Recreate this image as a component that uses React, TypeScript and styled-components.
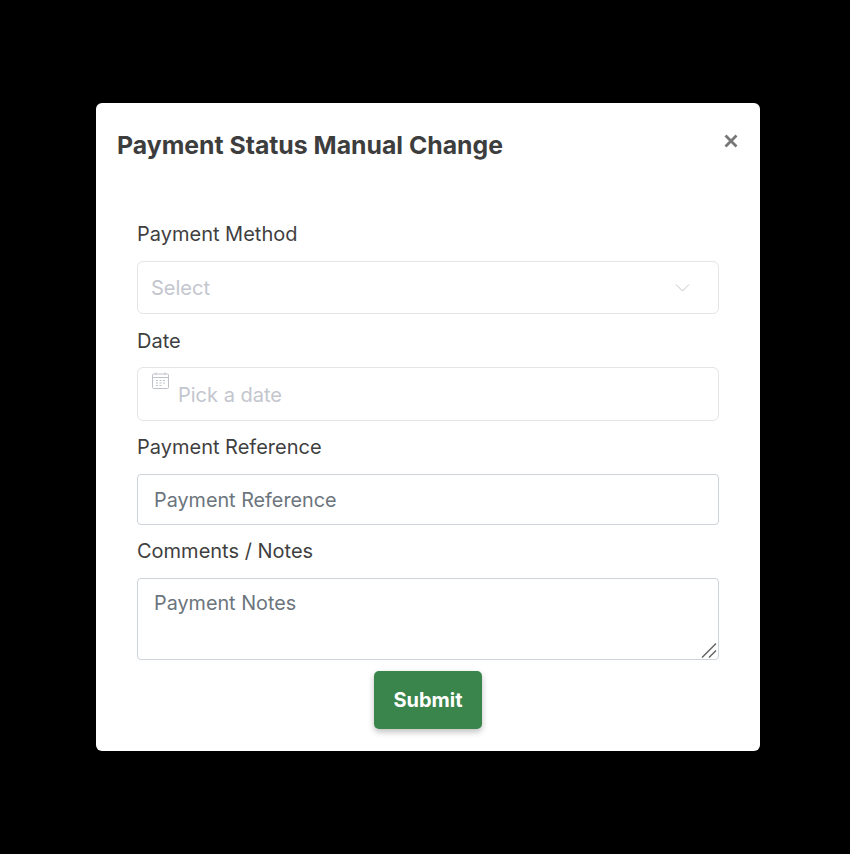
import React from 'react';
import styled, { createGlobalStyle } from 'styled-components';

const GlobalStyle = createGlobalStyle`
  * {
    box-sizing: border-box;
  }
  body {
    margin: 0;
    background: #000;
    font-family: 'Inter', 'Lato', sans-serif;
  }
`;

const App: React.FC = () => {
  return (
    <>
      <GlobalStyle />
      <Overlay>
        <Modal>
          <Header>
            <Title>Payment Status Manual Change</Title>
            <CloseButton aria-label="Close">
              <svg width="14" height="14" viewBox="0 0 14 14">
                <path d="M1.5 1.5 L12.5 12.5 M12.5 1.5 L1.5 12.5" stroke="#777" strokeWidth="2.8" />
              </svg>
            </CloseButton>
          </Header>
          <Form>
            <Label>Payment Method</Label>
            <SelectBox>
              <span>Select</span>
              <svg width="15" height="10" viewBox="0 0 15 10" fill="none">
                <path d="M1 1.5 L7.5 8 L14 1.5" stroke="#c2c5cc" strokeWidth="1" />
              </svg>
            </SelectBox>
            <Label $gap={13}>Date</Label>
            <DateBox>
              <CalendarIcon width="17" height="17" viewBox="0 0 17 17" fill="none">
                <rect x="0.5" y="2" width="16" height="14.5" rx="1" stroke="#bfc2c9" />
                <path d="M0.5 5.5 H16.5 M4 0.5 V3 M13 0.5 V3" stroke="#bfc2c9" />
                <path
                  d="M4 8.5 H6 M7.5 8.5 H9.5 M11 8.5 H13 M4 11 H6 M7.5 11 H9.5 M11 11 H13 M4 13.5 H6 M7.5 13.5 H9.5"
                  stroke="#bfc2c9"
                />
              </CalendarIcon>
              <DateInput placeholder="Pick a date" />
            </DateBox>
            <Label>Payment Reference</Label>
            <TextInput placeholder="Payment Reference" />
            <Label>Comments / Notes</Label>
            <NotesWrap>
              <NotesArea placeholder="Payment Notes" />
              <Grip width="16" height="16" viewBox="0 0 16 16" fill="none">
                <path d="M1 15.5 L15 1.5 M8 15.5 L15 8.5" stroke="#666" strokeWidth="1.5" />
              </Grip>
            </NotesWrap>
            <SubmitButton type="button">Submit</SubmitButton>
          </Form>
        </Modal>
      </Overlay>
    </>
  );
};

const Overlay = styled.div`
  min-height: 100vh;
  display: flex;
  justify-content: center;
  align-items: center;
  padding-left: 6px;
`;

const Modal = styled.div`
  width: 664px;
  height: 648px;
  background: #fff;
  border-radius: 6px;
  padding: 25px 21px 22px;
`;

const Header = styled.div`
  display: flex;
  justify-content: space-between;
  align-items: flex-start;
  height: 93px;
`;

const Title = styled.h2`
  margin: 0;
  font-size: 24.8px;
  line-height: 34px;
  font-weight: 700;
  color: #3d3d3d;
`;

const CloseButton = styled.button`
  display: flex;
  border: 0;
  padding: 0;
  margin: 6px 1px 0 0;
  background: none;
`;

const Form = styled.form`
  display: flex;
  flex-direction: column;
  padding: 0 20px;
`;

const Label = styled.label<{ $gap?: number }>`
  font-size: 20px;
  line-height: 26px;
  color: #3f3f3f;
  margin-bottom: ${(p) => p.$gap ?? 14}px;
`;

const SelectBox = styled.div`
  height: 53px;
  border: 1px solid #e3e5e9;
  border-radius: 6px;
  display: flex;
  justify-content: space-between;
  align-items: center;
  padding: 0 28px 0 13px;
  margin-bottom: 14px;
  font-size: 20px;
  color: #c3c6ce;
`;

const DateBox = styled.div`
  position: relative;
  height: 54px;
  border: 1px solid #e3e5e9;
  border-radius: 6px;
  padding: 2px 0 0 40px;
  margin-bottom: 13px;
`;

const CalendarIcon = styled.svg`
  position: absolute;
  top: 4px;
  left: 14px;
`;

const DateInput = styled.input`
  width: 100%;
  height: 100%;
  border: 0;
  outline: 0;
  padding: 0;
  background: transparent;
  font: inherit;
  font-size: 20px;
  &::placeholder {
    color: #c3c6ce;
    opacity: 1;
  }
`;

const TextInput = styled.input`
  height: 51px;
  border: 1px solid #ced4da;
  border-radius: 4px;
  padding: 0 16px;
  margin-bottom: 13px;
  font: inherit;
  font-size: 19.8px;
  &::placeholder {
    color: #6c757d;
    opacity: 1;
  }
`;

const NotesWrap = styled.div`
  position: relative;
  height: 82px;
  margin-bottom: 11px;
`;

const NotesArea = styled.textarea`
  display: block;
  width: 100%;
  height: 100%;
  border: 1px solid #ced4da;
  border-radius: 4px;
  padding: 12px 16px;
  font: inherit;
  font-size: 19.8px;
  resize: none;
  &::placeholder {
    color: #6c757d;
    opacity: 1;
  }
`;

const Grip = styled.svg`
  position: absolute;
  right: 2px;
  bottom: 2px;
  pointer-events: none;
`;

const SubmitButton = styled.button`
  align-self: center;
  width: 108px;
  height: 58px;
  border: 0;
  border-radius: 5px;
  background: #3a854b;
  color: #fff;
  font: inherit;
  font-size: 20px;
  font-weight: 700;
  box-shadow: 0 3px 6px rgba(0, 0, 0, 0.25);
`;

export default App;
